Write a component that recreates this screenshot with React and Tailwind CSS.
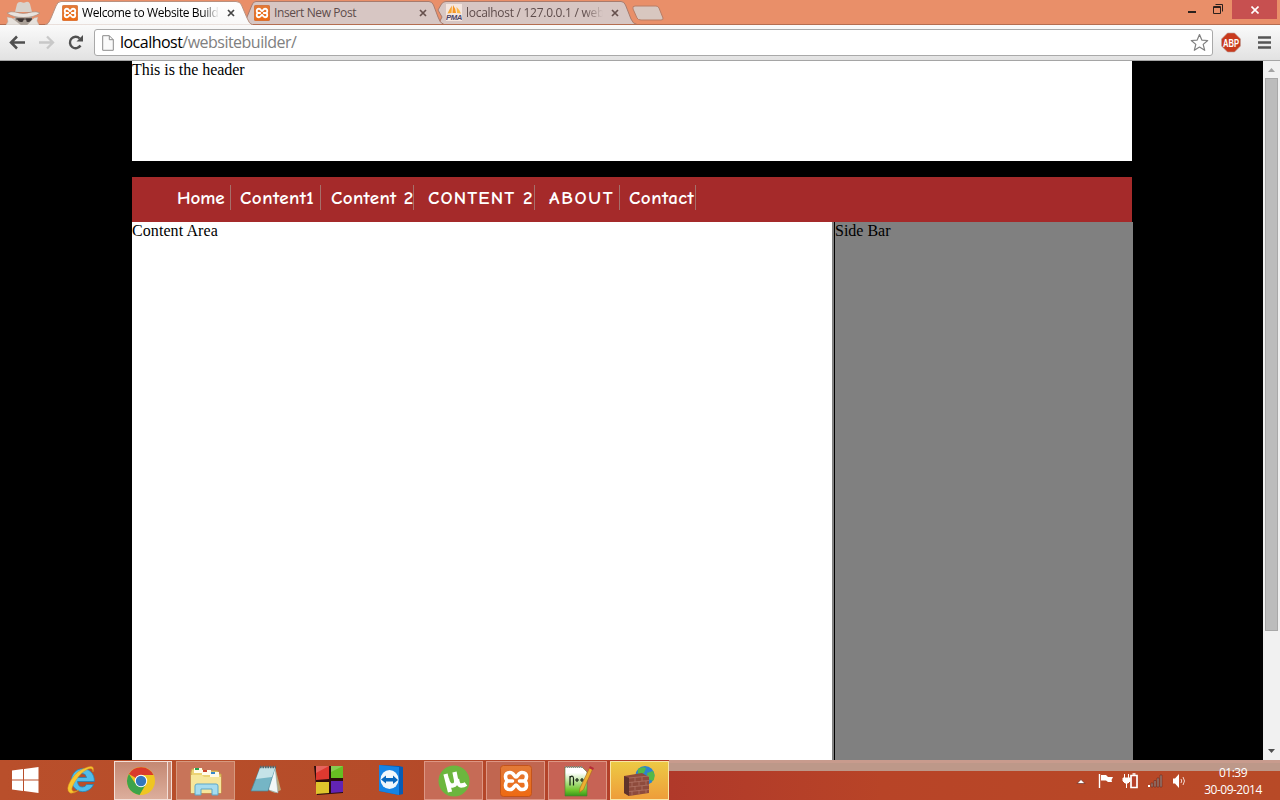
import React from 'react';

const ui = "font-['Segoe_UI','Open_Sans',sans-serif]";
const serif = "font-['Liberation_Serif',serif]";

function Xampp({ size = 16 }) {
  return (
    <svg width={size} height={size} viewBox="0 0 32 32" className="shrink-0">
      <defs>
        <linearGradient id="xo" x1="0" y1="0" x2="0" y2="1">
          <stop offset="0" stopColor="#e27a38" />
          <stop offset="1" stopColor="#ee6a12" />
        </linearGradient>
      </defs>
      <rect x=".5" y=".5" width="31" height="31" rx="3" fill="url(#xo)" stroke="#c4541a" />
      <path
        d="M10 7.500c-3.500 0-4.500 2-4.500 4 0 2.500 1.500 4.500 3 4.500-1.500 0-3 1.500-3 4.500 0 2.500 1.500 4 4.500 4 4 0 4-4.500 6-4.500s2 4.500 6 4.500c3 0 4.500-1.500 4.500-4 0-3-1.500-4.500-3-4.500 1.500 0 3-2 3-4.500 0-2-1-4-4.500-4-4 0-4 4.500-6 4.500s-2-4.500-6-4.500zM9 16h3.500M19.500 16H23"
        fill="none"
        stroke="#fff"
        strokeWidth="3.600"
        strokeLinecap="round"
        strokeLinejoin="round"
      />
    </svg>
  );
}

function Pma() {
  return (
    <svg width="16" height="17" viewBox="0 0 16 17" className="shrink-0">
      <rect width="16" height="17" fill="#f5e6df" />
      <path d="M6 1.500Q3 6 1.500 9.500L5.500 9z" fill="#f7a531" />
      <path d="M7 1q3 4 3 8H6.500z" fill="#f79420" />
      <path d="M10.500 3q3.500 3 4.500 6.500l-4-.5z" fill="#fbb84a" />
      <text x="0" y="16.200" fontSize="7.500" fontWeight="bold" fontStyle="italic" fontFamily="Liberation Sans, sans-serif" fill="#4a4468" textLength="16" lengthAdjust="spacingAndGlyphs">
        PMA
      </text>
    </svg>
  );
}

function Close({ color }) {
  return (
    <svg width="8" height="8" viewBox="0 0 8 8" className="shrink-0">
      <path d="M1 1l6 6M7 1L1 7" stroke={color} strokeWidth="1.700" />
    </svg>
  );
}

function TabShapes() {
  return (
    <svg width="680" height="25" viewBox="0 0 680 25" className="absolute left-0 top-0">
      <defs>
        <linearGradient id="act" x1="0" y1="0" x2="0" y2="1">
          <stop offset="0" stopColor="#fff" />
          <stop offset="1" stopColor="#f8f8f8" />
        </linearGradient>
      </defs>
      <path d="M436 24.500Q440 23 442 17L438 10L441.500 4Q443 1.500 446 1.500H621Q624 1.500 625.500 5L631 19Q633 24 637 24.500z" fill="#d7c6c3" stroke="#a87b6d" />
      <path d="M240 24.500Q246 23 247 17L252 5Q253 1.500 256 1.500H429Q432 1.500 433.500 5L438 17Q440 23.500 444 24.500z" fill="#d7c6c3" stroke="#a87b6d" />
      <path d="M0 24.500H680" stroke="#b56d50" />
      <path d="M45 25Q49 24 51 18L56 6Q57.500 1.500 61 1.500H236Q240 1.500 241.500 5L247 18Q249 24 253 25z" fill="url(#act)" stroke="#b9917f" />
      <path d="M48 25H251" stroke="#fafafa" />
      <path d="M633 9Q632 6 635 6H656Q658 6 659 8L663 18Q663.500 20 661 20H641Q638 20 637 18z" fill="#d8c7c0" stroke="#b97d65" />
    </svg>
  );
}

function Incognito() {
  return (
    <svg width="42" height="24" viewBox="0 0 42 24" className="shrink-0">
      <path d="M6 24l2-4 6-3h17l6 3 2 4z" fill="#c9c0b8" />
      <path d="M15 15h17v5l-4 4h-9l-4-4z" fill="#aaa097" />
      <path d="M15 11L17 3q1-2.500 4-2 3 1.500 5 0 3-.8 4 2l2 8z" fill="#d8d2cb" />
      <path d="M7 12q4-2 8-1 8 3 17 0 4-1 8 1-6 4.500-16.500 4.500T7 12z" fill="#e8e3de" stroke="#9d8a7d" strokeWidth=".6" />
      <path d="M17 17.500h7l-1 3q-4 2-6-3zM26 17.500h6q-2 5-5.500 3z" fill="#3f3735" />
      <path d="M16 18h16" stroke="#3f3735" />
      <path d="M7 16l5 1 9 7H6l2-3zM38 16l-4 1-7 7h12l-2-4z" fill="#e6e1dc" stroke="#b3a598" strokeWidth=".4" />
    </svg>
  );
}

function TitleBar() {
  return (
    <div className="relative flex h-[25px] shrink-0 bg-[#e98f69]">
      <TabShapes />
      <div className={`relative flex h-[25px] w-[680px] items-center text-[12px] leading-[16px] tracking-[-0.4px] ${ui}`}>
        <div className="flex w-[62px] items-start"><Incognito /></div>
        <div className="flex w-[192px] items-center">
          <Xampp />
          <div className="ml-1 mr-2 w-[137px] overflow-hidden whitespace-nowrap text-black [mask-image:linear-gradient(to_right,#000_88%,transparent)]">Welcome to Website Build</div>
          <Close color="#444" />
        </div>
        <div className="flex w-[192px] items-center text-[#5e4c4b]">
          <Xampp />
          <div className="ml-1 mr-2 w-[137px] whitespace-nowrap">Insert New Post</div>
          <Close color="#66504d" />
        </div>
        <div className="flex items-center text-[#5e4c4b]">
          <Pma />
          <div className="ml-1 mr-2 w-[137px] overflow-hidden whitespace-nowrap tracking-[-0.28px] [mask-image:linear-gradient(to_right,#000_86%,transparent)]">localhost / 127.0.0.1 / web</div>
          <Close color="#66504d" />
        </div>
      </div>
      <div className="flex flex-1 justify-end border-b border-[#b56d50]">
        <svg width="58" height="20" viewBox="0 0 58 20">
          <path d="M14 12h8" stroke="#2b211d" strokeWidth="2" />
          <path d="M39.500 6.500h7v7h-7z M39 7.500h8" fill="none" stroke="#2b211d" />
          <path d="M41.500 4.500h7v7" fill="none" stroke="#2b211d" />
        </svg>
      </div>
      <div className="flex h-[25px] w-12 border-b border-[#b56d50]">
        <div className="flex h-[19px] w-[45px] items-center justify-center bg-[#c75050]">
          <svg width="8" height="8" viewBox="0 0 8 8"><path d="M.5.500l7 7M7.500.500l-7 7" stroke="#fff" strokeWidth="1.600" /></svg>
        </div>
      </div>
    </div>
  );
}

function Toolbar() {
  return (
    <div className="flex h-9 shrink-0 items-center border-b border-[#a5a5a5] bg-linear-to-b from-[#fafafa] to-[#e2e2e2]">
      <svg width="94" height="35" viewBox="0 0 94 35" className="shrink-0">
        <path d="M25 17.500H11M17 11.500l-6 6 6 6" fill="none" stroke="#505050" strokeWidth="2.500" />
        <path d="M39 17.500h13M47 11.500l6 6-6 6" fill="none" stroke="#c8c8c8" strokeWidth="2.300" />
        <path d="M80.500 20.500a5.700 5.700 0 1 1-.8-7" fill="none" stroke="#505050" strokeWidth="2.400" />
        <path d="M83 10v6.500h-6.500z" fill="#505050" />
      </svg>
      <div className="flex h-[27px] w-[1119px] items-center rounded-[3px] border border-[#a9a9a9] bg-white">
        <svg width="12" height="16" viewBox="0 0 12 16" className="ml-[7px] shrink-0">
          <path d="M.7.700h6.600l4 4v10.600H.7zM7.300.700v4h4" fill="#fafafa" stroke="#8b8b8b" />
        </svg>
        <div className={`-mt-[2px] ml-[6px] flex-1 text-[16px] leading-5 tracking-[-0.52px] text-[#808080] ${ui}`}><span className="text-black">localhost</span>/websitebuilder/</div>
        <svg width="19" height="19" viewBox="0 0 19 19" className="mr-[3px]">
          <path d="M9.500 1.500l2.300 5.600 5.900.4-4.500 3.900 1.500 5.900-5.200-3.200-5.200 3.200 1.500-5.900L1.300 7.500l5.900-.4z" fill="#fff" stroke="#808080" strokeWidth="1.200" strokeLinejoin="round" />
        </svg>
      </div>
      <svg width="67" height="35" viewBox="0 0 67 35" className="shrink-0">
        <path d="M14.500 8h7l6 6v7l-6 6h-7l-6-6v-7z" fill="#c93a1d" stroke="#b8a09a" strokeWidth=".6" />
        <text x="10" y="21.500" fontSize="10" fontWeight="bold" fontFamily="Liberation Sans, sans-serif" fill="#fff" textLength="16" lengthAdjust="spacingAndGlyphs">ABP</text>
        <path d="M45 12.500h13M45 17.500h13M45 22.500h13" stroke="#555" strokeWidth="2.600" />
      </svg>
    </div>
  );
}

const links = [
  ['Home', 'w-[54px]', 'tracking-[-0.1px]', ''],
  ['Content1', 'w-[81px]', 'tracking-[0.45px]', 'ml-[9px]'],
  ['Content 2', 'w-[83px]', 'tracking-[0.35px]', 'ml-[10px]'],
  ['CONTENT 2', 'w-[107px]', 'tracking-[1.1px]', 'ml-[14px]'],
  ['ABOUT', 'w-[71px]', 'tracking-[1.7px]', 'ml-[14px]'],
  ['Contact', 'w-[67px]', 'tracking-[0.45px]', 'ml-[9px]'],
];

function Page() {
  return (
    <div className="flex min-h-0 flex-1 bg-black">
      <div className={`ml-[132px] flex w-[1001px] flex-col text-[16px] leading-[18px] text-black ${serif}`}>
        <div className="h-[100px] w-[1000px] bg-white tracking-[-0.04px]">This is the header</div>
        <nav className="mt-4 flex h-[45px] w-[1000px] items-start bg-[#a52a2a] pl-[45px] pt-2">
          {links.map(([label, width, tracking, gap]) => (
            <a key={label} className={`h-[25px] shrink-0 whitespace-nowrap border-r border-[#a5706b] font-['Comic_Sans_MS','Comic_Neue','Open_Sans',cursive] text-[19px] font-semibold leading-[27px] text-white ${width} ${tracking} ${gap}`}>{label}</a>
          ))}
        </nav>
        <div className="flex flex-1">
          <div className="w-[700px] bg-white tracking-[0.08px]">Content Area</div>
          <div className="w-[2px] bg-[#808080]" />
          <div className="flex-1 border-l border-black bg-[#808080]">Side Bar</div>
        </div>
      </div>
      <div className="ml-auto flex w-[17px] flex-col items-center bg-[#f1f1f1]">
        <svg width="17" height="17" viewBox="0 0 17 17"><path d="M5 11l3.500-4 3.500 4z" fill="#a3a3a3" /></svg>
        <div className="h-[553px] w-[13px] border border-[#a8a8a8] bg-[#bcbcbc]" />
        <svg width="17" height="17" viewBox="0 0 17 17" className="mt-auto"><path d="M5 6l3.500 4L12 6z" fill="#505050" /></svg>
      </div>
    </div>
  );
}

function IE() {
  return (
    <svg width="32" height="32" viewBox="0 0 32 32">
      <path d="M28.500 20.500a11.500 11.500 0 1 1 .8-5.500v2.500H12.500q.5 5.500 5 5.500 3 0 4-2.500zM12.500 13.500h9q-.5-4-4.500-4t-4.500 4z" fill="#51bdea" stroke="#2583b8" strokeWidth=".8" fillRule="evenodd" />
      <path d="M28 8q2-7-5-5Q12 6 6 16T5 29q4 1 9-3-6 3-7 0Q6 24 11 16T23 5q5-2 5 3z" fill="#f9c62e" stroke="#dc961c" strokeWidth=".5" />
    </svg>
  );
}

function ChromeLogo() {
  return (
    <svg width="30" height="30" viewBox="0 0 30 30">
      <circle cx="15" cy="15" r="14" fill="#efc522" />
      <path d="M15 15L2.900 8A14 14 0 0 1 27.500 9H15z" fill="#d93a2b" />
      <path d="M2.900 8A14 14 0 0 0 13.500 29L20 18l-5-3-6 2z" fill="#3da34a" />
      <circle cx="15" cy="15" r="6.200" fill="#fff" />
      <circle cx="15" cy="15" r="5.200" fill="#3477bd" />
    </svg>
  );
}

function Explorer() {
  return (
    <svg width="34" height="32" viewBox="0 0 34 32">
      <path d="M3 4h10l2 2h14v3h3v19H2V7z" fill="#ecd273" stroke="#c7a649" />
      <path d="M5 3h8v5H5zM13 5h9v5h-9zM21 7h9v5h-9z" fill="#fffbe8" />
      <path d="M6 3h4v2H6z" fill="#28a34b" /><path d="M14 5h4v2h-4z" fill="#ca4328" /><path d="M22 7h4v2h-4z" fill="#3689ca" />
      <path d="M2 10h11l2 2h17v16H2z" fill="#f6e69b" />
      <path d="M6 30V21q0-2 2-2h19q2 0 2 2v9h-6v-6H12v6z" fill="#a6dcee" stroke="#5ca7c7" />
    </svg>
  );
}

function Notepad() {
  return (
    <svg width="32" height="32" viewBox="0 0 32 32">
      <path d="M25 3l6 23-6 3-5-2z" fill="#b9a477" />
      <path d="M10 3h15l3 26-9-3z" fill="#f2f7f7" stroke="#8fa9ae" strokeWidth=".6" />
      <path d="M10 4h15l-7 23H1z" fill="#75b5c5" stroke="#4b8798" strokeWidth=".7" />
      <path d="M10 4h15l-3 9L6 15z" fill="#c5e3e8" />
      <path d="M10 3h16" stroke="#53686e" strokeWidth="2.500" strokeDasharray="1.500 1" />
    </svg>
  );
}

function Blocks() {
  return (
    <svg width="32" height="32" viewBox="0 0 32 32">
      <path d="M1 2h29v27L4 31z" fill="#2c0d0c" />
      <path d="M3 2h13v13l-13 1z" fill="#df3930" /><path d="M18 2h12v12H18z" fill="#67be22" />
      <path d="M3 18h13v11l-13 1z" fill="#dfc52c" /><path d="M18 17h12v11l-12 1z" fill="#6224b3" />
      <path d="M3 2h13l-13 7zM18 2h12l-12 6z" fill="#fff" opacity=".22" />
    </svg>
  );
}

function TeamViewer() {
  return (
    <svg width="28" height="32" viewBox="0 0 28 32">
      <path d="M2 1l20 1 4 1v27l-4 1-20-4z" fill="#075cb5" />
      <path d="M2 1l20 2v28L2 27z" fill="#1684e5" />
      <ellipse cx="12.500" cy="15.500" rx="9" ry="9.500" fill="#f2f7fb" />
      <path d="M4 15.500l5-4v2.500h7v-2.500l5 4.500-5 4v-2.500H9v2z" fill="#0866bd" />
    </svg>
  );
}

function Torrent() {
  return (
    <svg width="32" height="32" viewBox="0 0 32 32">
      <circle cx="16" cy="16" r="15.500" fill="#6cb63e" />
      <path d="M7.500 9l4.500 18M9 14q1.500 7 5.500 6.500 4.500-.5 3.500-6L16.500 7M19 14q1 6.500 4 6.500 3 0 5-1.500" fill="none" stroke="#fff" strokeWidth="4.300" />
    </svg>
  );
}

function NotepadPP() {
  return (
    <svg width="32" height="32" viewBox="0 0 32 32">
      <defs><linearGradient id="np" x1="0" y1="0" x2="0" y2="1"><stop offset=".2" stopColor="#fff" /><stop offset=".8" stopColor="#70c52c" /><stop offset="1" stopColor="#37971a" /></linearGradient></defs>
      <path d="M3 2h17l5 5v24H3z" fill="url(#np)" stroke="#497d33" strokeWidth=".6" />
      <path d="M3 2h17" stroke="#8a8a8a" strokeWidth="2" strokeDasharray="1 1" />
      <path d="M8 20.500v-9.500M8 12.500q3-3 3.500 1v7M13 15h4M15 13v4M18 15h4M20 13v4" fill="none" stroke="#172414" strokeWidth="1.200" />
      <path d="M27.500 3l3 1.500-9 20-4 3 .5-4.500z" fill="#edaf30" stroke="#a2671f" strokeWidth=".6" />
      <path d="M27 3l1-2 4 2-1 2z" fill="#b62b38" />
    </svg>
  );
}

function Firewall() {
  return (
    <svg width="34" height="32" viewBox="0 0 34 32">
      <circle cx="22" cy="10.500" r="9.500" fill="#2d83ce" />
      <path d="M15 4q5-3 8-1l-2 5-6 3zM24 8l6-2q3 5 0 10l-5-2z" fill="#53b847" />
      <path d="M1 11l18-3 7 4v16L6 31l-5-3z" fill="#8e4b3c" />
      <path d="M1 11l5 2v18l-5-3z" fill="#60332b" />
      <path d="M6 13l20-2M6 17.500l20-2M6 22l20-2M6 26.500l20-2M12 13v4M19 12v4M9 17v4.500M16 16.500v4M23 16v4M12 21v4M19 21v4M9 26v4M16 25v4M23 25v3" stroke="#b5796a" strokeWidth=".7" fill="none" />
    </svg>
  );
}

function TaskButton({ children, className }) {
  return <div className={`flex h-[39px] shrink-0 items-center justify-center ${className}`}>{children}</div>;
}

function Taskbar() {
  return (
    <div className="flex h-10 shrink-0 items-start bg-linear-to-r from-[#b94f2b] from-0% via-[#b54c29] via-30% to-[#b13a29] to-55%">
      <TaskButton className="w-[50px]">
        <svg width="27" height="26" viewBox="0 0 27 26"><path d="M0 3.500L11 2v10.500H0zM12 1.900L26.500 0v12.500H12zM0 13.500h11V24L0 22.500zM12 13.500h14.500V26L12 24.100z" fill="#fff" /></svg>
      </TaskButton>
      <TaskButton className="w-[64px] pr-[2px]"><IE /></TaskButton>
      <TaskButton className="mt-px w-[54px] border border-[#f3ded7] bg-linear-to-b from-[#c48873] to-[#dcae9c]"><ChromeLogo /></TaskButton>
      <div className="mt-px h-[39px] w-1 border border-l-0 border-[#f3ded7] bg-[#c98d78]" />
      <TaskButton className="ml-1 mt-px w-[59px] border border-[#d6997f] bg-[#c87459]"><Explorer /></TaskButton>
      <TaskButton className="w-[62px]"><Notepad /></TaskButton>
      <TaskButton className="w-[64px]"><Blocks /></TaskButton>
      <TaskButton className="w-[62px] pr-[2px]"><TeamViewer /></TaskButton>
      <TaskButton className="ml-px mt-px w-[59px] border border-[#dd9684] bg-[#c66b56]"><Torrent /></TaskButton>
      <TaskButton className="ml-[3px] mt-px w-[59px] border border-[#dd9684] bg-[#c16650]"><Xampp size={32} /></TaskButton>
      <TaskButton className="ml-[3px] mt-px w-[59px] border border-[#dd9684] bg-[#c76355]"><NotepadPP /></TaskButton>
      <TaskButton className="ml-[3px] mt-px w-[59px] border border-[#f8e6a5] bg-linear-to-b from-[#ecc944] to-[#ee9d3a]"><Firewall /></TaskButton>
      <div className="flex h-10 flex-1 flex-col bg-linear-to-r from-[#b0392a] via-[#b84427] via-35% to-[#b84a27]">
        <div className="flex h-[11px] flex-col">
          <div className="h-[3px] bg-[#c89b8d]" />
          <div className="flex-1 bg-[#bd9889]" />
        </div>
        <div className="flex flex-1 items-start justify-end">
          <svg width="116" height="24" viewBox="0 0 116 24" className="mr-[14px] shrink-0">
            <path d="M4 12.500l4-4 4 4z" fill="#fff" stroke="#5a2018" strokeWidth=".6" />
            <path d="M26.500 3v14" stroke="#fff" strokeWidth="1.400" /><path d="M28 4h5l2 2h5l-1.500 3 .5 2h-4l-2-1.500h-5z" fill="#fff" />
            <path d="M51.500 3v4M55.500 3v4M50 7h7v3l-2 2h-3l-2-2zM53.500 11v6" fill="#fff" stroke="#fff" strokeWidth="1" />
            <path d="M58 4.500h6v12h-6z" fill="#b7422b" stroke="#fff" strokeWidth="1.700" /><path d="M59.500 3h3" stroke="#fff" strokeWidth="1.500" />
            <path d="M75 16v-2h2v2z" fill="#fff" /><path d="M78 16v-4h2v4zM81 16V9.500h2V16zM84 16V7h2v9zM87 16V4h2v12z" fill="#9e7d73" stroke="#642c23" strokeWidth=".6" />
            <path d="M100 7.500h2l4-4.500v14l-4-4.500h-2z" fill="#fff" /><path d="M108 8q1.500 2 0 4M110 6q3 4 0 8" fill="none" stroke="#f2d6cf" />
          </svg>
          <div className={`mr-[17px] mt-[-7px] w-[60px] whitespace-nowrap text-center text-[12px] leading-[17px] tracking-[-0.5px] text-white ${ui}`}>
            <div>01:39</div><div>30-09-2014</div>
          </div>
        </div>
      </div>
    </div>
  );
}

export default function App() {
  return (
    <div className="flex h-[800px] w-[1280px] flex-col overflow-hidden">
      <TitleBar />
      <Toolbar />
      <Page />
      <Taskbar />
    </div>
  );
}
